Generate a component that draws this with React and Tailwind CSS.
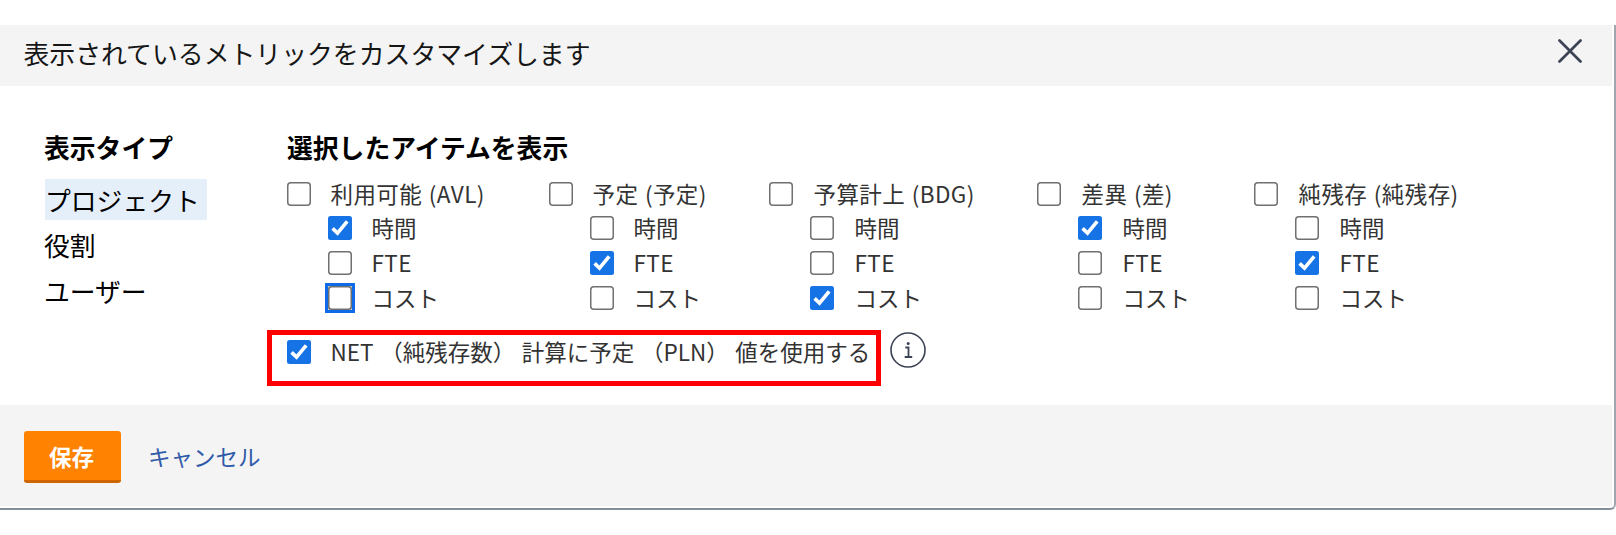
const METRICS = ['時間', 'FTE', 'コスト'];

const ROW_HEIGHTS = ['h-[34px]', 'h-[36px]', 'h-[33px]'];

const GROUPS = [
  { label: '利用可能 (AVL)', checked: [0], focused: 2, width: 'w-[262px]', gap: 'gap-[19.5px]' },
  { label: '予定 (予定)', checked: [1], width: 'w-[220px]', gap: 'gap-[19.5px]' },
  { label: '予算計上 (BDG)', checked: [2], width: 'w-[268px]', gap: 'gap-[20.5px]' },
  { label: '差異 (差)', checked: [0], width: 'w-[217px]', gap: 'gap-[20.5px]' },
  { label: '純残存 (純残存)', checked: [1], width: 'w-[240px]', gap: 'gap-[20.5px]' },
];

function Check({ checked, focused }) {
  return (
    <svg
      width="24"
      height="24"
      viewBox="0 0 24 24"
      className={focused ? 'shrink-0 outline-[3px] outline-[#0f6ae8]' : 'shrink-0'}
    >
      {checked ? (
        <>
          <rect width="24" height="24" rx="2.5" fill="#1673e6" />
          <path d="M4.6 12.4l4.9 4.7L19.2 5.4" fill="none" stroke="#fff" strokeWidth="3.6" />
        </>
      ) : (
        <>
          {focused && <rect width="24" height="24" fill="#c9c2b8" />}
          <rect x=".75" y=".75" width="22.5" height="22.5" rx="3" fill="#fff" stroke="#707070" strokeWidth="1.5" />
        </>
      )}
    </svg>
  );
}

function Group({ label, checked, focused, width, gap }) {
  return (
    <div className={`${width} shrink-0 whitespace-nowrap`}>
      <div className={`flex h-[34px] items-center ${gap}`}>
        <Check />
        <span className="-mt-[2px] tracking-[0.4px] [word-spacing:1.2px] [font-kerning:none]">{label}</span>
      </div>
      <div className="ml-[41px]">
        {METRICS.map((m, i) => (
          <div key={m} className={`flex items-center ${gap} ${ROW_HEIGHTS[i]}`}>
            <Check checked={checked.includes(i)} focused={focused === i} />
            <span className={m === 'FTE' ? '-mt-[2px] tracking-[0.4px]' : '-mt-[2px]'}>{m}</span>
          </div>
        ))}
      </div>
    </div>
  );
}

export default function App() {
  return (
    <div className="h-[535px] w-[1616px] overflow-hidden bg-white pt-[25px] font-['Noto_Sans_CJK_JP',sans-serif] text-[22.5px] leading-[34px] text-[#333]">
      <div className="flex h-[485px] flex-col rounded-br-md border-r-2 border-b-2 border-r-[#a0a6ae] border-b-[#858f9b]">
        <header className="mr-[2px] flex h-[61px] items-center justify-between bg-[#f4f4f4] pr-[30px] pl-[23.5px]">
          <h1 className="pb-[6px] text-[25.85px] text-[#161616]">表示されているメトリックをカスタマイズします</h1>
          <svg width="24" height="24" viewBox="0 0 24 24" className="mb-[9px]" fill="none" stroke="#3b4354" strokeWidth="2.7" strokeLinecap="round">
            <path d="M1.5 1.5l21 21M22.5 1.5l-21 21" />
          </svg>
        </header>

        <main className="flex h-[319px] pt-[42px] pl-[45px] text-black">
          <nav className="w-[242px] text-[25.8px]">
            <h2 className="-ml-px h-[51px] leading-[37px] font-bold">表示タイプ</h2>
            <div className="flex h-[41px] w-[162px] items-center bg-[#e5effa]">プロジェクト</div>
            <div className="-ml-px flex h-[45px] items-center pt-1">役割</div>
            <div className="-ml-px flex h-[46px] items-center pt-[5px]">ユーザー</div>
          </nav>
          <section>
            <h2 className="h-[49px] text-[25.8px] leading-[37px] font-bold">選択したアイテムを表示</h2>
            <div className="flex text-[#333]">
              {GROUPS.map((g) => (
                <Group key={g.label} {...g} />
              ))}
            </div>
            <div className="mt-4 flex items-start text-[#333]">
              <div className="-ml-5 flex h-[56px] w-[614px] items-center gap-[19.5px] border-[5px] border-[#ff0000] pb-3 pl-[15px] whitespace-pre">
                <Check checked />
                <span className="-mt-[2px] [word-spacing:1.6px]">NET （純残存数） 計算に予定 （PLN） 値を使用する</span>
              </div>
              <svg width="36" height="36" viewBox="0 0 36 36" className="mt-[2px] ml-[9px]" fill="none" stroke="#3b4354">
                <circle cx="18" cy="18" r="17" strokeWidth="1.6" />
                <path d="M15.3 15.5h3.2v9.3M14.7 25h7.5" strokeWidth="1.8" />
                <circle cx="18.2" cy="11.5" r="1.5" fill="#3b4354" stroke="none" />
              </svg>
            </div>
          </section>
        </main>

        <footer className="mr-[2px] flex h-[101px] items-start gap-[27px] bg-[#f4f4f4] pt-[26px] pl-6">
          <button className="h-[52px] w-[97px] rounded-[3px] border-b-[3px] border-[#cf6500] bg-[#ff8200] pr-[2px] font-bold text-white">保存</button>
          <a className="leading-[50px] text-[#2f5aa8]">キャンセル</a>
        </footer>
      </div>
    </div>
  );
}
